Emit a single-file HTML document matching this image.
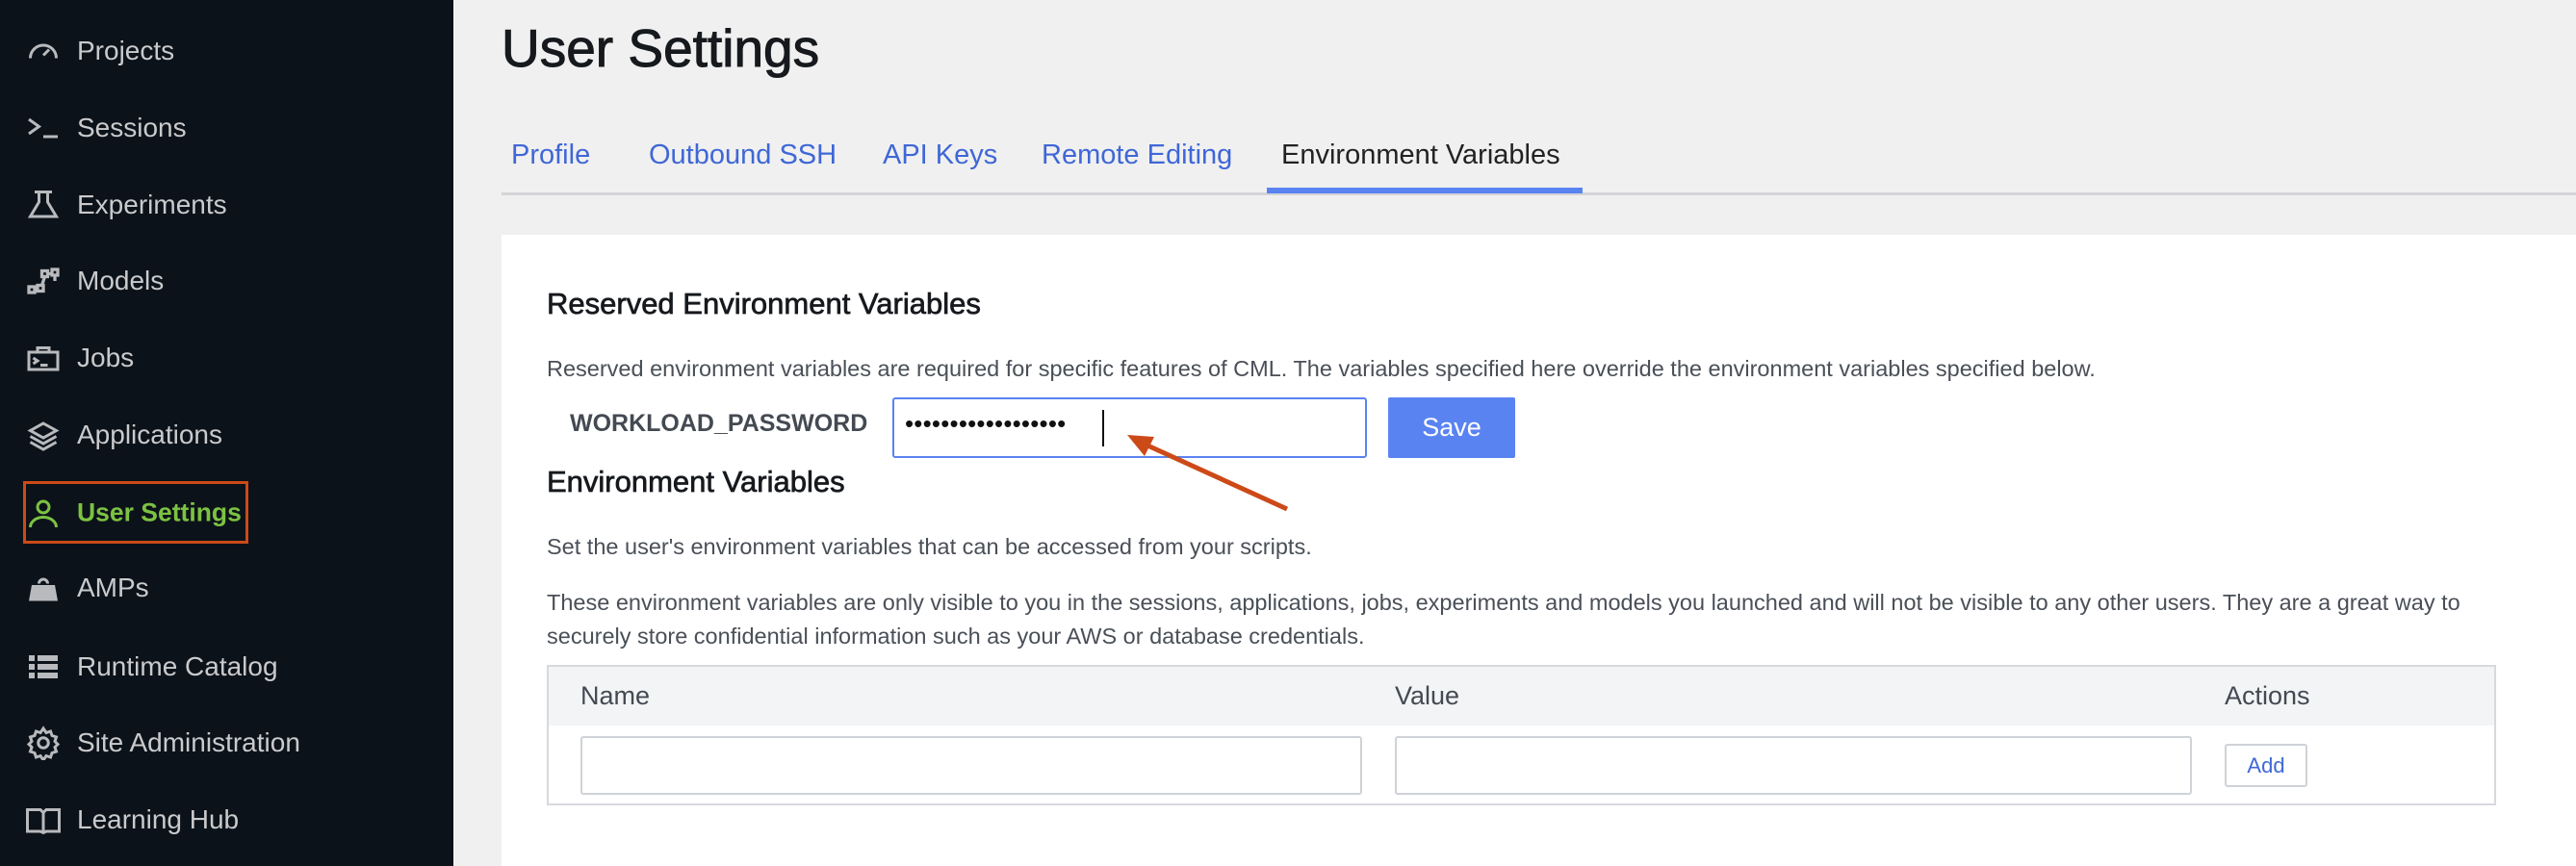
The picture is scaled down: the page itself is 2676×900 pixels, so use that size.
<!DOCTYPE html>
<html><head><meta charset="utf-8"><style>
*{margin:0;padding:0;box-sizing:border-box}
body{width:2676px;height:900px;overflow:hidden;background:#f0f0f0;font-family:"Liberation Sans",Arial,sans-serif;position:relative}
.a{position:absolute;white-space:nowrap}
#side{position:absolute;left:0;top:0;width:471px;height:900px;background:#0c1219}
.nav{position:absolute;left:80px;font-size:28px;color:#c9cacc;transform:translateY(-50%)}
.ic{position:absolute;left:27px;width:36px;height:36px;transform:translateY(-50%)}
.tab{position:absolute;top:145px;font-size:29px;color:#3f67d6}
.card{position:absolute;left:521px;top:244px;width:2155px;height:656px;background:#fff}
.txt{font-size:23.5px;color:#4a4f57}
.h{-webkit-text-stroke:0.7px #16191d}
</style></head><body>
<div id="side">
<svg class="ic" style="top:53px" viewBox="0 0 24 24" fill="none" stroke="#b8babd" stroke-width="2"><path d="M3 17a9 9 0 1 1 18 0"/><path d="M12 15l4-4"/></svg>
<div class="nav" style="top:53px">Projects</div>
<svg class="ic" style="top:133px" viewBox="0 0 24 24" fill="none" stroke="#b8babd" stroke-width="2"><path d="M2 6l7 5-7 5M12 18h10"/></svg>
<div class="nav" style="top:133px">Sessions</div>
<svg class="ic" style="top:213px" viewBox="0 0 24 24" fill="none" stroke="#b8babd" stroke-width="2"><path d="M6 3h12M9 3v7l-6 10h18l-6-10V3"/></svg>
<div class="nav" style="top:213px">Experiments</div>
<svg class="ic" style="top:292px" viewBox="0 0 24 24" fill="none" stroke="#b8babd" stroke-width="2.2"><rect x="2" y="16" width="4" height="4"/><rect x="8" y="15" width="4" height="4"/><rect x="11" y="5" width="4" height="4"/><rect x="18" y="4" width="4" height="4"/><path d="M6 18h2M11 15l2-6M15 7h3M20 8v4"/></svg>
<div class="nav" style="top:292px">Models</div>
<svg class="ic" style="top:372px" viewBox="0 0 24 24" fill="none" stroke="#b8babd" stroke-width="2"><path d="M2 8h20v12H2zM8 8V5h8v3M5 12l3 2-3 2M10 17h5"/></svg>
<div class="nav" style="top:372px">Jobs</div>
<svg class="ic" style="top:452px" viewBox="0 0 24 24" fill="none" stroke="#b8babd" stroke-width="2"><path d="M12 4l9 5-9 5-9-5zM3 13l9 5 9-5M3 17l9 5 9-5"/></svg>
<div class="nav" style="top:452px">Applications</div>
<div class="a" style="left:24px;top:500px;width:234px;height:65px;border:3px solid #cc4a18"></div>
<svg class="ic" style="top:533px" viewBox="0 0 24 24" fill="none" stroke="#7cc242" stroke-width="2"><circle cx="12" cy="8" r="4"/><path d="M3 22a9 7 0 0 1 18 0"/></svg>
<div class="nav" style="top:533px;color:#7cc242;font-weight:bold;font-size:26.5px">User Settings</div>
<svg class="ic" style="top:611px" viewBox="0 0 24 24" fill="#b8babd"><path d="M8 9a4 4 0 0 1 8 0h-2a2 2 0 0 0-4 0z"/><path d="M4 10h16l2 11H2z"/></svg>
<div class="nav" style="top:611px">AMPs</div>
<svg class="ic" style="top:693px" viewBox="0 0 24 24" fill="#b8babd"><rect x="2" y="4" width="4" height="4"/><rect x="8" y="4" width="14" height="4"/><rect x="2" y="10" width="4" height="4"/><rect x="8" y="10" width="14" height="4"/><rect x="2" y="16" width="4" height="4"/><rect x="8" y="16" width="14" height="4"/></svg>
<div class="nav" style="top:693px">Runtime Catalog</div>
<svg class="ic" style="top:772px" viewBox="0 0 24 24" fill="none" stroke="#b8babd" stroke-width="2"><circle cx="12" cy="12" r="3.5"/><path d="M12 2l2 3 3-1 1 3 3 1-1 3 2 2-2 2 1 3-3 1-1 3-3-1-2 3-2-3-3 1-1-3-3-1 1-3-2-2 2-2-1-3 3-1 1-3 3 1z"/></svg>
<div class="nav" style="top:772px">Site Administration</div>
<svg class="ic" style="top:852px" viewBox="0 0 24 24" fill="none" stroke="#b8babd" stroke-width="2"><path d="M1 5h9l2 2 2-2h9v15h-9l-2 1-2-1H1zM12 7v14"/></svg>
<div class="nav" style="top:852px">Learning Hub</div>
</div>

<div class="a" style="left:521px;top:18px;font-size:55px;color:#16191d;-webkit-text-stroke:1px #16191d">User Settings</div>
<div class="tab" style="left:531px">Profile</div>
<div class="tab" style="left:674px">Outbound SSH</div>
<div class="tab" style="left:917px">API Keys</div>
<div class="tab" style="left:1082px">Remote Editing</div>
<div class="tab" style="left:1331px;color:#222">Environment Variables</div>
<div class="a" style="left:521px;top:200px;width:2155px;height:3px;background:#d4d4d8"></div>
<div class="a" style="left:1316px;top:195px;width:328px;height:6px;background:#5a83f2"></div>

<div class="card"></div>
<div class="a h" style="left:568px;top:298px;font-size:31px;color:#16191d">Reserved Environment Variables</div>
<div class="a txt" style="left:568px;top:370px">Reserved environment variables are required for specific features of CML. The variables specified here override the environment variables specified below.</div>
<div class="a" style="left:592px;top:426px;font-size:25px;font-weight:bold;color:#444a52">WORKLOAD_PASSWORD</div>
<div class="a" style="left:927px;top:413px;width:493px;height:63px;border:2px solid #5a83f2;border-radius:3px;background:#fff"></div>
<div class="a" style="left:940px;top:425px;font-size:26px;color:#111;letter-spacing:0.2px">••••••••••••••••••</div>
<div class="a" style="left:1145px;top:426px;width:2px;height:38px;background:#111"></div>
<div class="a" style="left:1442px;top:413px;width:132px;height:63px;background:#5a83f2;border-radius:2px;color:#fff;font-size:27px;text-align:center;line-height:63px">Save</div>
<svg class="a" style="left:0;top:0" width="2676" height="900"><line x1="1337" y1="529" x2="1190" y2="462" stroke="#cc4a18" stroke-width="5"/><path d="M1171 452l28 2-10 20z" fill="#cc4a18"/></svg>
<div class="a h" style="left:568px;top:483px;font-size:31px;color:#16191d">Environment Variables</div>
<div class="a txt" style="left:568px;top:555px">Set the user's environment variables that can be accessed from your scripts.</div>
<div class="a txt" style="left:568px;top:613px">These environment variables are only visible to you in the sessions, applications, jobs, experiments and models you launched and will not be visible to any other users. They are a great way to</div>
<div class="a txt" style="left:568px;top:648px">securely store confidential information such as your AWS or database credentials.</div>
<div class="a" style="left:568px;top:691px;width:2025px;height:146px;border:2px solid #d7d9dd;background:#fff"></div>
<div class="a" style="left:570px;top:693px;width:2021px;height:61px;background:#f3f4f6"></div>
<div class="a" style="left:603px;top:708px;font-size:27px;color:#444a52">Name</div>
<div class="a" style="left:1449px;top:708px;font-size:27px;color:#444a52">Value</div>
<div class="a" style="left:2311px;top:708px;font-size:27px;color:#444a52">Actions</div>
<div class="a" style="left:603px;top:765px;width:812px;height:61px;border:2px solid #cfd2d6;border-radius:3px"></div>
<div class="a" style="left:1449px;top:765px;width:828px;height:61px;border:2px solid #cfd2d6;border-radius:3px"></div>
<div class="a" style="left:2311px;top:773px;width:86px;height:45px;border:2px solid #cfd2d6;border-radius:3px;color:#3f67d6;font-size:22px;text-align:center;line-height:41px">Add</div>
</body></html>
